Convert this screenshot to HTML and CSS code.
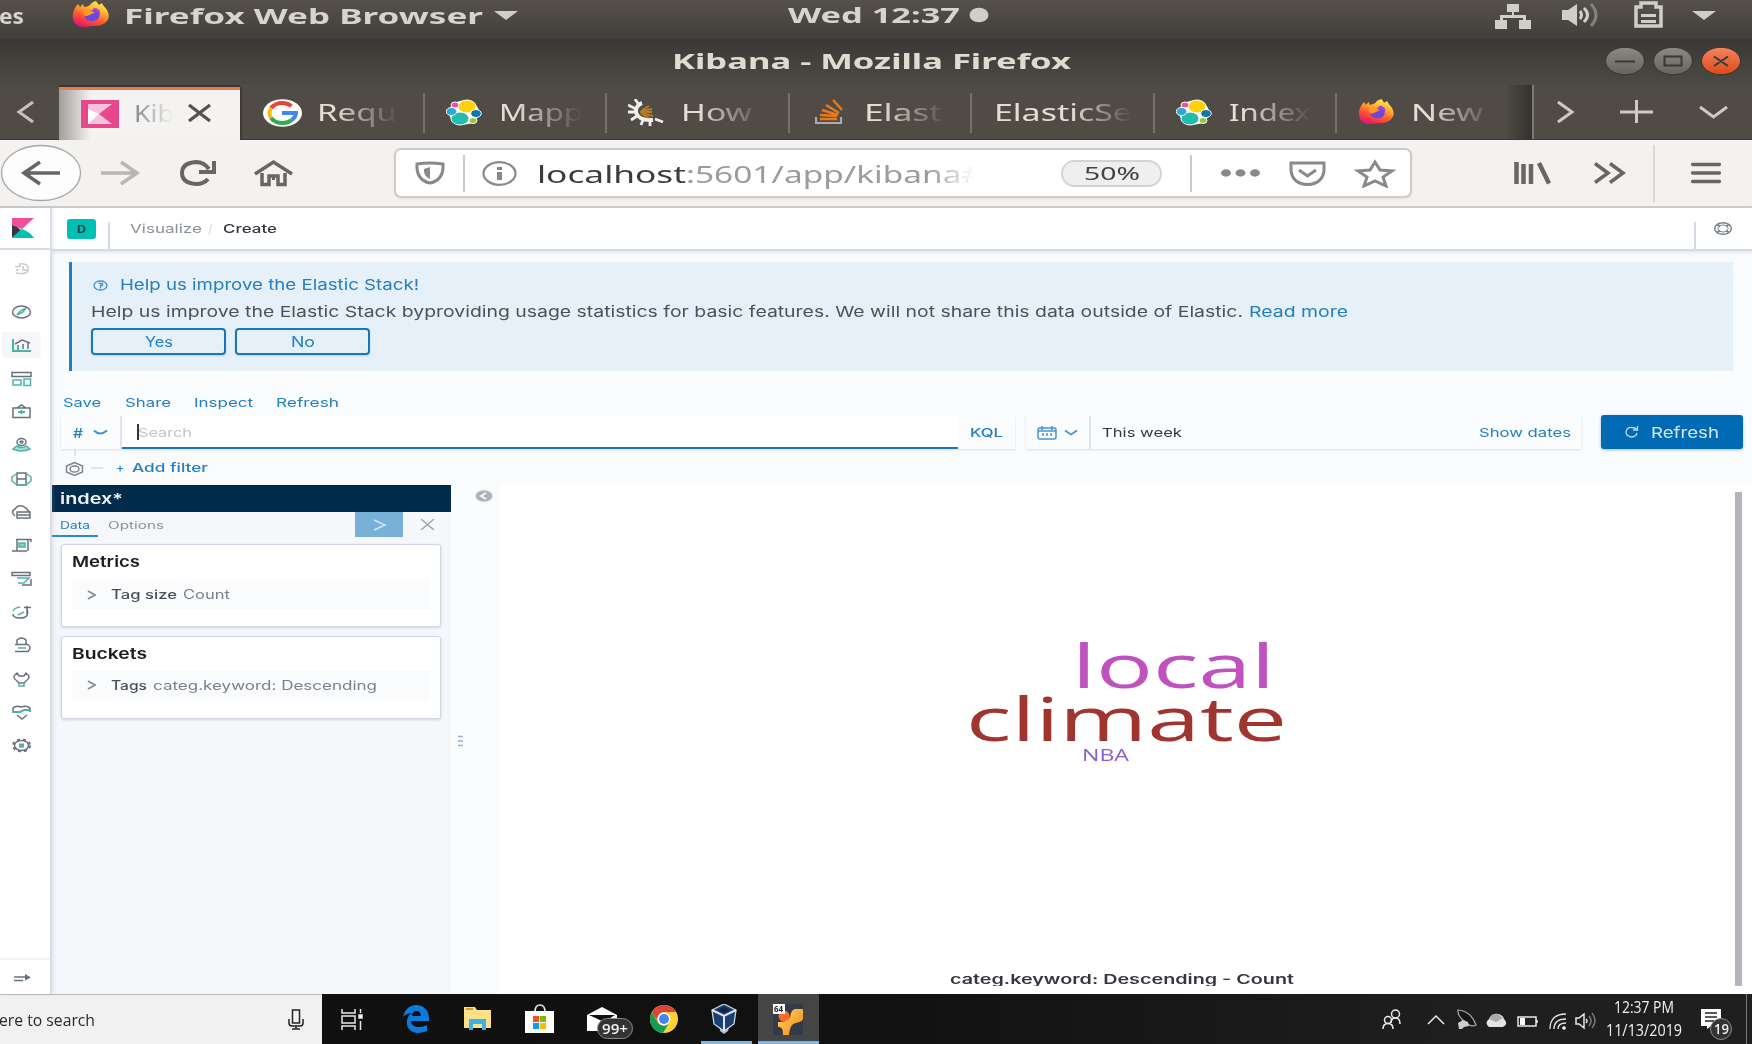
FILE: index.html
```html
<!DOCTYPE html>
<html lang="en">
<head>
<meta charset="utf-8">
<title>Kibana - Mozilla Firefox</title>
<link rel="stylesheet" href="styles.css">
</head>
<body>
<svg class="defs" width="0" height="0">
  <defs>
    <linearGradient id="fx" x1="0.8" y1="0" x2="0.3" y2="1"><stop offset="0" stop-color="#fff44f"/><stop offset=".35" stop-color="#ffb02e"/><stop offset=".65" stop-color="#ff5a2e"/><stop offset="1" stop-color="#e6146e"/></linearGradient>
    <linearGradient id="gb" x1="0" y1="0" x2="0" y2="1"><stop offset="0" stop-color="#8b8982"/><stop offset="1" stop-color="#66645d"/></linearGradient>
    <linearGradient id="ob" x1="0" y1="0" x2="0" y2="1"><stop offset="0" stop-color="#f58461"/><stop offset="1" stop-color="#dd4a16"/></linearGradient>
    <linearGradient id="vm" x1="0" y1="0" x2="1" y2="1"><stop offset="0" stop-color="#ffd45c"/><stop offset="1" stop-color="#f08a1c"/></linearGradient>
    <symbol id="firefox" viewBox="0 0 39 28"><path d="M1 12C2 8 4 5 6 3l2 3 3-3 1 3c3 0 4-1 6-2 1-2 3-3 6-4l3 4 3-2c1 3 3 4 5 7 2 4 3 8-1 12-4 4-9 4-14 4C8 28-1 24 1 12z" fill="url(#fx)"/><ellipse cx="20" cy="14.500" rx="7.500" ry="5.500" fill="#6f46e0"/><path d="M13 8c5 0 7 2 10 4-4 0-5 3-9 3-3 0-4-4-1-7z" fill="#ff9a1f"/><path d="M22 7c5 0 8 4 5 8 0-4-3-5-7-5z" fill="#a33fe0"/></symbol>
    <symbol id="elastic" viewBox="0 0 36 26"><ellipse cx="18" cy="13" rx="15" ry="12" fill="#fff"/><ellipse cx="21" cy="7" rx="9" ry="6.500" fill="#fed10a" stroke="#fff"/><ellipse cx="14" cy="19" rx="9" ry="6.500" fill="#1fbeaf" stroke="#fff"/><ellipse cx="9" cy="5.500" rx="4" ry="3" fill="#f04e98" stroke="#fff"/><ellipse cx="5.500" cy="12" rx="5.300" ry="4" fill="#24a9e0" stroke="#fff"/><ellipse cx="30" cy="14" rx="5.300" ry="4" fill="#0a7aa8" stroke="#fff"/><ellipse cx="27" cy="21" rx="4" ry="3" fill="#93c83e" stroke="#fff"/></symbol>
  </defs>
</svg>

<header class="topbar">
  <span class="es"><span class="t" data-w="25">es</span></span>
  <svg class="fox" width="39" height="28"><use href="#firefox"/></svg>
  <span class="t app" data-w="359">Firefox Web Browser</span>
  <svg class="tri" width="24" height="9"><path d="M0 0h24L12 9z" fill="#d0cec9"/></svg>
  <span class="t clock" data-w="172">Wed 12:37</span>
  <svg class="dot" width="20" height="16"><ellipse cx="10" cy="8" rx="9.500" ry="7.300" fill="#d0cec9"/></svg>
  <svg class="net" width="36" height="26" fill="#d0cec9"><path d="M12 1h12v8h-5v3h12v5h5v9H24v-9h4v-2H8v2h4v9H0v-9h5v-5h12V9h-5z"/></svg>
  <svg class="vol" width="37" height="24"><path d="M0 7h6l9-6v22l-9-6H0z" fill="#d0cec9"/><path d="M18 8q3 4 0 8M22 5q7 7 0 14" fill="none" stroke="#d0cec9" stroke-width="3"/><path d="M29 1q10 11 0 22" fill="none" stroke="#84827c" stroke-width="3"/></svg>
  <svg class="bat" width="29" height="27"><path d="M2 6h5V2h15v4h5v19H2z" fill="none" stroke="#d0cec9" stroke-width="3.500"/><path d="M7 13h15v3H7zM7 19h15v3H7z" fill="#d0cec9"/></svg>
  <svg class="tri2" width="24" height="9"><path d="M0 0h24L12 9z" fill="#d0cec9"/></svg>
</header>

<div class="titlebar">
  <span class="t title" data-w="399">Kibana - Mozilla Firefox</span>
  <svg class="winbtns" width="138" height="30">
    <g stroke="#34332f"><ellipse cx="20" cy="15" rx="19.500" ry="13.700" fill="url(#gb)"/><ellipse cx="68" cy="15" rx="19.500" ry="13.700" fill="url(#gb)"/><ellipse cx="116" cy="15" rx="19.500" ry="13.700" fill="url(#ob)"/></g>
    <path d="M10 15.500h20M59.500 10.500h17v9h-17zM109 10.500l14 9.500M123 10.500L109 20" fill="none" stroke="#3a3934" stroke-width="2"/>
  </svg>
</div>

<nav class="tabs">
  <svg class="tprev" width="20" height="24"><path d="M17 2L3 12l14 10" fill="none" stroke="#c5c1b8" stroke-width="3"/></svg>
  <div class="tab active">
    <svg width="38" height="28"><path fill="#e8478b" d="M0 0h38v28H0z"/><path d="M7 4h24L18 14l13 10H7z" fill="#f5c3da"/><path d="M7 9l11 5L7 24z" fill="#fff"/></svg>
    <span class="clip kil"><span class="t" data-w="40">Kib</span></span>
    <svg class="close" width="25" height="18"><path d="M2 1l21 16M23 1L2 17" stroke="#55534f" stroke-width="3.200"/></svg>
  </div>
  <div class="tab first">
    <svg width="39" height="28"><ellipse cx="19.500" cy="14" rx="19.500" ry="13.700" fill="#fff"/><g fill="none" stroke-width="4"><path d="M8 9q4-5 11.500-5 5 0 9 3" stroke="#ea4335"/><path d="M8 9q-3 5 0 10" stroke="#fbbc05"/><path d="M8 19q4 5 11.500 5 6 0 9-3" stroke="#34a853"/><path d="M19 14h14q0 4-4.500 7" stroke="#4285f4"/></g></svg>
    <span class="clip"><span class="t" data-w="80">Requ</span></span>
  </div>
  <div class="tab"><svg width="36" height="27"><use href="#elastic"/></svg><span class="clip"><span class="t" data-w="84">Mapp</span></span></div>
  <div class="tab"><svg width="36" height="27"><path d="M14 4C5 7 4 22 25 21" fill="none" stroke="#eee" stroke-width="4"/><path d="M7 0l4 6M0 6l8 4M0 13h7M3 21l6-4M13 26l2-5M22 27v-5M35 23l-8-3" stroke="#eee" stroke-width="2.800"/><path d="M12 13h12M14 11l7-4M14 15l7 4M13 12l11-2M13 14l12 3" stroke="#b97a22" stroke-width="2"/></svg><span class="clip"><span class="t" data-w="71">How</span></span></div>
  <div class="tab so"><svg width="28" height="26"><path d="M1 18v6h25v-6" fill="none" stroke="#a9abae" stroke-width="2.200"/><path d="M5 20h17M5 16l17 1M7 11l16 5M11 6l13 8M18 1l9 10" stroke="#e87a1d" stroke-width="2.500"/></svg><span class="clip"><span class="t" data-w="78">Elast</span></span></div>
  <div class="tab plain"><span class="clip wide"><span class="t" data-w="138">ElasticSe</span></span></div>
  <div class="tab"><svg width="36" height="27"><use href="#elastic"/></svg><span class="clip"><span class="t" data-w="82">Index</span></span></div>
  <div class="tab last"><svg width="38" height="27"><use href="#firefox"/></svg><span class="clip"><span class="t" data-w="72">New</span></span></div>
  <div class="overflow"></div>
  <svg class="tabctl" width="220" height="54" fill="none" stroke="#cfcbc2" stroke-width="3"><path d="M26 17l14 10-14 10M88 27h33M104.500 15v23M168 22l13.500 10L195 22"/></svg>
</nav>

<div class="toolbar">
  <svg class="navicons" width="300" height="66" fill="none" stroke="#686663" stroke-width="3.500">
    <ellipse cx="41" cy="33" rx="39.500" ry="27.500" fill="#fdfdfd" stroke="#a9a7a4" stroke-width="1.300"/>
    <path d="M60 33H24M40 22L24 33l16 11"/>
    <path d="M101 33h36M121 22l16 11-16 11" stroke="#b9b7b5"/>
    <path d="M208 39q-4 5-12 5-14-1-14-11t14-11q8 0 13 7" stroke-width="4"/><path d="M214 21v11h-15" stroke-width="4"/>
    <path d="M255 34l18.500-12L292 34"/><path d="M262 33v11.500h7V36h9v8.500h7V33" stroke-width="3.500"/><path d="M272 37h3v3h-3z" fill="#686663" stroke="none"/>
  </svg>
  <div class="url">
    <svg class="shield" width="30" height="24" fill="none" stroke="#8a8987" stroke-width="3"><path d="M2 3q13-2 26 0 1 16-13 19Q1 19 2 3z"/><path d="M15 6v12q-7-3-6-10z" fill="#8a8987" stroke="none"/></svg>
    <i class="vsep"></i>
    <svg class="info" width="35" height="25"><ellipse cx="17.500" cy="12.500" rx="16" ry="11.300" fill="none" stroke="#8a8987" stroke-width="2.200"/><path d="M15 6h5v3h-5zM15 11h5v8h-5z" fill="#8a8987"/></svg>
    <span class="addr"><span class="t host" data-w="149">localhost</span><span class="t path" data-w="297">:5601/app/kibana#</span></span>
    <span class="zoom"><span class="t" data-w="56">50%</span></span>
    <i class="vsep vs2"></i>
    <svg class="urlicons" width="180" height="30" fill="none" stroke="#8a8987" stroke-width="3"><g fill="#8a8987" stroke="none"><ellipse cx="7" cy="15" rx="5" ry="3.700"/><ellipse cx="21.500" cy="15" rx="5" ry="3.700"/><ellipse cx="36" cy="15" rx="5" ry="3.700"/></g><path d="M72 5h33v8q-2 13-16.500 13.500Q74 26 72 13z"/><path d="M80 12l8.500 6 8.500-6"/><path d="M156 4l5 8 12 1-9 6 3 9-11-5-11 5 3-9-9-6 12-1z"/></svg>
  </div>
  <svg class="lib" width="112" height="26" stroke="#686663" stroke-width="4.500" fill="none"><path d="M2.500 2v22M9.500 4v20M17 4v20M25 3l10 20.500"/><path d="M81 3.500L94 13 81 22.500M96 3.500L109 13 96 22.500" stroke-width="3.500"/></svg>
  <i class="tsep"></i>
  <svg class="burger" width="30" height="22"><path d="M1.500 2.500h27M1.500 11h27M1.500 19.500h27" stroke="#686663" stroke-width="3.300" stroke-linecap="round"/></svg>
</div>

<div class="kibana">
  <aside class="side">
    <div class="logo"><svg width="22" height="20"><path d="M0 0h22L10 11 0 7z" fill="#f04e98"/><path d="M0 7q5 1 9 5l-9 8z" fill="#343741"/><path d="M22 20H0l10-9q8 3 12 9z" fill="#00bfb3"/></svg></div>
    <svg class="icons" width="51" height="530" fill="none" stroke="#69707d" stroke-width="1.500">
      <path d="M15 14.500h5v-2M16 18h3M23 14v4h4M16 21q9 2 12-2v-4q-2-4-9-3" stroke="#ccc"/>
      <ellipse cx="21.500" cy="60" rx="9" ry="6"/><path d="M17 63l3-4 6-3-3 4z" stroke="#4db3aa"/>
      <rect x="2" y="80" width="39" height="26" rx="3" fill="#f5f7fa" stroke="none"/>
      <path d="M13 87v12h18M18 98v-5" stroke="#4db3aa" stroke-width="2"/><path d="M15 92l7-4 8 3M23 97v-5M28 97v-6"/>
      <path d="M12 120.500h19v4H12z"/><path d="M13 128h8v5h-8zM24 127h6.500v6.500H24z" stroke="#4db3aa"/>
      <path d="M13 156v9.500h17V156zM17 156l4.500-3 4.500 3"/><path d="M18 160h7M21.500 158v4" stroke="#4db3aa" stroke-width="2"/>
      <ellipse cx="21.500" cy="190" rx="4.500" ry="3.500"/><ellipse cx="21.500" cy="190" rx="1.500" ry="1"/><path d="M13 197q8 4 17 0l-4-3q-4 3-9 0z" fill="#a5dbd6" stroke="#4db3aa"/>
      <path d="M17 221h9v12h-9zM17 227h9"/><path d="M16 222l-4 3v4l5 4h9l5-4v-4l-4-3" stroke="#4db3aa"/>
      <path d="M15 264q-5-4 0-7 4-6 11-1l4 5M17 260h13v6H17zM17 263h13"/><path d="M19 263h5" stroke="#4db3aa"/>
      <path d="M16 287.500h15M17 288v11M28 288v11M12 299h15M31 287v3"/><path d="M19 291h6v4h-6z" fill="#8cd0ca" stroke="#4db3aa"/>
      <path d="M12 320.500h18v3H12zM22 333h9v-6"/><path d="M17 326h12l-5 5h-6" stroke="#4db3aa"/>
      <path d="M13 362q0 4 7 4 10 0 7-9M24 355.500h7M27 354v8"/><path d="M13 359q1-3 7-4M18 363l6-3" stroke="#4db3aa"/>
      <path d="M17 392v-4q5-4 9 0v4M15 399.500h13q4-4 0-7H15"/><path d="M18 396h8" stroke="#4db3aa"/>
      <path d="M17 421l2 3h5l2-3q6 4 0 8l-2 2h-5l-2-2q-6-4 0-8z"/><path d="M19 431v3h5v-3" stroke="#4db3aa"/>
      <path d="M13 460v-4q3-3 8-1 6-2 9 1v4M17 463l5 4 5-4"/><path d="M12 460h8l4-2h7" stroke="#4db3aa" stroke-width="2"/>
      <ellipse cx="21.500" cy="493.500" rx="7" ry="5" stroke-width="1.500"/><ellipse cx="21.500" cy="493.500" rx="8.700" ry="6" stroke-dasharray="3 3" stroke-width="1.800"/><path d="M19 491.500h5v4h-5z" fill="#4db3aa" stroke="none"/>
    </svg>
    <div class="expand"><svg width="17" height="9"><path d="M0 3h12M0 6.500h9" stroke="#69707d" stroke-width="1.300"/><path d="M11 0l6 3.500-6 3z" fill="#69707d"/></svg></div>
  </aside>

  <div class="main">
    <div class="head">
      <span class="space"><span class="t" data-w="9">D</span></span>
      <i class="hsep"></i>
      <span class="t crumb" data-w="72">Visualize</span><span class="slash">/</span><span class="t crumb cur" data-w="54">Create</span>
      <i class="hsep right"></i>
      <svg class="help" width="20" height="15" fill="none" stroke="#7b818c"><ellipse cx="10" cy="7.500" rx="8.300" ry="5.800" stroke-width="1.500"/><ellipse cx="10" cy="7.500" rx="5" ry="3.500"/><path d="M4 3.500l3 2M16 3.500l-3 2M4 11.500l3-2M16 11.500l-3-2" stroke-width="2"/></svg>
    </div>

    <section class="callout">
      <div class="ctitle"><svg width="15" height="11" fill="none" stroke="#4594cc" stroke-width="1.300"><ellipse cx="7.500" cy="5.500" rx="6.500" ry="4.500"/><path d="M5.500 3.500h4v2h-2v3"/></svg><span class="t" data-w="299">Help us improve the Elastic Stack!</span></div>
      <div class="cbody"><span class="t" data-w="1152">Help us improve the Elastic Stack byproviding usage statistics for basic features. We will not share this data outside of Elastic.</span><span class="t more" data-w="99">Read more</span></div>
      <div class="cbtns"><button><span class="t" data-w="28">Yes</span></button><button><span class="t" data-w="24">No</span></button></div>
    </section>

    <div class="menu"><span class="t" data-w="38">Save</span><span class="t" data-w="46">Share</span><span class="t" data-w="59">Inspect</span><span class="t" data-w="63">Refresh</span></div>

    <div class="query">
      <div class="qbox">
        <div class="saved"><span class="t" data-w="10">#</span><svg width="15" height="7"><path d="M1 1.500q6 6 13 0" fill="none" stroke="#4594cc" stroke-width="2"/></svg></div>
        <div class="input"><i class="caret"></i><span class="t" data-w="54">Search</span></div>
        <div class="kql"><span class="t" data-w="33">KQL</span></div>
      </div>
      <div class="dates">
        <div class="cal"><svg width="20" height="14" fill="none" stroke="#4594cc" stroke-width="1.500"><rect x="1" y="2" width="18" height="11" rx="2"/><path d="M1 5h18M5 0v4M15 0v4M6 7v3M10 7v3M14 7v3"/></svg><svg width="14" height="7"><path d="M1 1.500l6 4 6-4" fill="none" stroke="#4594cc" stroke-width="1.700"/></svg></div>
        <span class="t week" data-w="80">This week</span><span class="t show" data-w="92">Show dates</span>
      </div>
      <div class="refresh"><svg width="15" height="12"><path d="M13 7q-1 4-6 4-5-1-5-5 1-5 6-4.500 3 0 5 2M13.500 0v4H9" fill="none" stroke="#bcd9ee" stroke-width="1.300"/></svg><span class="t" data-w="68">Refresh</span></div>
    </div>

    <div class="filters"><svg width="40" height="27" fill="none" stroke="#7b818c" stroke-width="1.400"><path d="M11 0v7" stroke="#d3dae6"/><path d="M10.500 13.500l8 3.500v6l-8 3.500-8-3.500v-6z"/><ellipse cx="10.500" cy="20" rx="4.500" ry="3"/><path d="M27 19h12" stroke="#d3dae6"/></svg><span class="plus">+</span><span class="t" data-w="76">Add filter</span></div>

    <div class="work">
      <div class="editor">
        <div class="index"><span class="t" data-w="63">index*</span></div>
        <div class="etabs">
          <div class="etab on"><span class="t" data-w="30">Data</span></div><span class="t opt" data-w="56">Options</span>
          <div class="play"><svg width="14" height="12"><path d="M1 1l11 5-11 5" fill="none" stroke="#d5e7f4" stroke-width="1.400"/></svg></div>
          <svg class="x" width="15" height="11"><path d="M1 0l13 11M14 0L1 11" stroke="#9a9fa8" stroke-width="1.300"/></svg>
        </div>
        <div class="card"><h3><span class="t" data-w="68">Metrics</span></h3><div class="agg"><svg width="9" height="10"><path d="M1 1l7 4-7 4" fill="none" stroke="#8b9099" stroke-width="2"/></svg><span class="t lab" data-w="66">Tag size</span><span class="t" data-w="47">Count</span></div></div>
        <div class="card second"><h3><span class="t" data-w="75">Buckets</span></h3><div class="agg"><svg width="9" height="10"><path d="M1 1l7 4-7 4" fill="none" stroke="#8b9099" stroke-width="2"/></svg><span class="t lab" data-w="36">Tags</span><span class="t" data-w="224">categ.keyword: Descending</span></div></div>
      </div>
      <div class="gutter">
        <svg class="collapse" width="18" height="12"><ellipse cx="9" cy="6" rx="8.500" ry="5.800" fill="#adb2bb"/><path d="M11 3L6 6l5 3" fill="none" stroke="#fff" stroke-width="1.600"/></svg>
        <svg class="handle" width="6" height="12"><path d="M0 1.500h5M0 6h5M0 10.500h5" stroke="#9fb0c6" stroke-width="1.500"/></svg>
      </div>
      <div class="viz">
        <div class="cloud">
          <span class="word local"><span class="t" data-w="203">local</span></span>
          <span class="word climate"><span class="t" data-w="321">climate</span></span>
          <span class="word nba"><span class="t" data-w="47">NBA</span></span>
        </div>
        <div class="caption"><span class="t" data-w="344">categ.keyword: Descending - Count</span></div>
        <i class="scroll"></i>
      </div>
    </div>
  </div>
</div>

<footer class="taskbar">
  <div class="search"><span class="t" data-w="96">ere to search</span><svg width="16" height="21" fill="none" stroke="#222" stroke-width="1.500"><rect x="4.500" y="1" width="7" height="13"/><path d="M1 10v4q0 3 3 3h8q3 0 3-3v-4M8 17v3M4 20h8"/></svg></div>
  <div class="apps">
    <svg class="tv" width="22" height="21" fill="none" stroke="#e8e8e8" stroke-width="1.500"><path d="M1 0v4h13V0M1 21v-4h13v4M1 7h13v7H1zM19.500 0v4M19.500 12v9"/><path d="M18 6h3v3h-3z" fill="#fff"/></svg>
    <svg width="26" height="28"><path d="M0 12C2 4 7 0 13 0c8 0 13 6 13 13v3H8c0 4 4 6 8 6 3 0 6-1 8-2v6c-3 1-6 2-9 2C7 28 3 22 4 16c0-3 2-6 5-8-4 0-7 2-9 4zm9-1h9c0-3-2-5-4-5-3 0-5 2-5 5z" fill="#0b7bdc"/></svg>
    <svg class="folder" width="29" height="24"><path d="M1 0h11l2 3h14v18H1z" fill="#ffe08a"/><path d="M3 1h7v2H3z" fill="#d5962a"/><path d="M6 23V12h17v11h-4v-6h-9v6z" fill="#38b2ea"/></svg>
    <svg class="store" width="30" height="30"><path d="M10 8q0-7 5-7t5 7" fill="none" stroke="#ddd" stroke-width="1.700"/><path d="M0 7h29v22H0z" fill="#fff"/><path d="M8 12h6v6H8z" fill="#f25022"/><path d="M15 12h6v6h-6z" fill="#7fba00"/><path d="M8 19h6v6H8z" fill="#00a4ef"/><path d="M15 19h6v6h-6z" fill="#ffb900"/></svg>
    <div class="mail"><svg width="31" height="26"><path d="M0 8L15 0l15 8v16H0z" fill="#fff"/><path d="M2 8h26L17 15z" fill="#111"/></svg><span class="badge"><span class="t" data-w="26">99+</span></span></div>
    <svg class="chrome" width="28" height="28"><circle cx="14" cy="14" r="14" fill="#fdd03b"/><path d="M1.900 7A14 14 0 0 1 26.100 7H14a7 7 0 0 0-6 10z" fill="#db4437"/><path d="M1.900 7A14 14 0 0 0 13 28l6-10a7 7 0 0 1-11 0z" fill="#0f9d58"/><circle cx="14" cy="14" r="6.500" fill="#fff"/><circle cx="14" cy="14" r="5" fill="#4285f4"/></svg>
    <div class="run vb"><svg width="26" height="30"><path d="M8 20h11l-2 7-4 3-4-3z" fill="#aebfd2"/><path d="M13 0l12 6-2 14-10 7L3 20 1 6z" fill="#1b3f70" stroke="#c9d6e4" stroke-width="1.300"/><path d="M1 6l12 6 12-6M13 12v15" fill="none" stroke="#dde6ef" stroke-width="2"/><path d="M6 6l7-3 7 3-7 3z" fill="#0c274c"/></svg></div>
    <div class="run on"><svg width="30" height="31"><path d="M0 0h30v31H0z" fill="#333a49"/><circle cx="11" cy="12" r="5.500" fill="#ff6a2c"/><path d="M30 5h-8c-4 1-4 5-5 8-2 4-5 5-12 5v5c4 0 5 2 5 8h6c1-7 2-11 7-12 4-1 7-2 7-5z" fill="url(#vm)"/><path d="M0 0h12v10H0z" fill="#fff"/></svg><span class="bits"><span class="t" data-w="9">64</span></span></div>
  </div>
  <svg class="tray" width="216" height="24" fill="none" stroke="#e8e8e8" stroke-width="1.500">
    <circle cx="13.500" cy="6" r="4"/><path d="M9 15q0-5 4.500-5t4.500 6"/><circle cx="6" cy="12" r="3.500"/><path d="M1 21q0-5.500 5-5.500t5 5.500"/>
    <path d="M46 16l8-8 8 8"/>
    <path d="M76 2q13 1 18 15-5 3-12-4-7-6-6-11z" fill="#151515" stroke="#aaa" stroke-width="1.200"/><path d="M76 15l5-3 5 2 1 4-5 1-2 2h-3z" fill="#ccc"  stroke="none"/>
    <path d="M107 19q-5-4 0-8 3-6 9-5 5 1 6 5 5 5-1 8z" fill="#e4e4e4" stroke="none"/><path d="M107 11q3-6 9-5l5 4-7 4z" fill="#aaa" stroke="none"/>
    <path d="M136 9h18v9h-18zM155 12v3"/><path d="M138 10h5v7h-5z" fill="#fff" stroke="none"/>
    <path d="M168 21Q168 6 184 6M172 21Q172 11 184 11M176 21q0-6 8-6" stroke-width="1.300"/><circle cx="182" cy="20" r="1.800" fill="#fff" stroke="none"/>
    <path d="M194 10h3l5-4v14l-5-4h-3zM204 11q2 2 0 4"/><path d="M207 8q4 5 0 10M210 5q6 8 0 15" stroke="#777"/>
  </svg>
  <div class="when"><span class="t" data-w="60">12:37 PM</span><span class="t" data-w="76">11/13/2019</span></div>
  <div class="note"><svg width="22" height="20"><path d="M0 0h20v17H10l-4 3v-3H0z" fill="#fff"/><path d="M4 4h12M4 8h12M4 12h9" stroke="#222" stroke-width="1.500"/></svg><span class="badge num"><span class="t" data-w="15">19</span></span></div>
  <i class="peek"></i>
</footer>
<script src="fit.js"></script>
</body>
</html>
```

FILE: styles.css
```css
* { box-sizing: border-box; }
body { margin: 0; width: 1752px; height: 1044px; overflow: hidden; font-family: Inter, sans-serif; background: #fff; display: flex; flex-direction: column; }
svg { flex: none; display: block; }
i { flex: none; display: block; }
.defs { position: absolute; }
.t { display: inline-block; flex: none; white-space: pre; transform-origin: 0 50%; }

/* desktop top bar */
.topbar { flex: none; height: 38px; display: flex; align-items: flex-start; background: linear-gradient(#56524a, #403f3a); font: 700 22px/31px "Noto Sans", sans-serif; color: #d6d4cf; }
.es { width: 73px; margin-left: -1px; }
.fox { margin-top: 1px; }
.app { margin-left: 13px; }
.tri { margin: 11px 0 0 11px; }
.clock { margin-left: 270px; margin-top: -1px; }
.dot { margin: 7px 0 0 9px; }
.net { margin: 3px 0 0 506px; }
.vol { margin: 3px 0 0 31px; }
.bat { margin: 1px 0 0 35px; }
.tri2 { margin: 11px 0 0 29px; }

.titlebar { flex: none; height: 47px; display: flex; align-items: flex-start; background: linear-gradient(#393834, #4c4a44); font: 700 22px/31px "Noto Sans", sans-serif; color: #e0dbd1; }
.title { margin: 7px 0 0 672px; }
.winbtns { margin: 8px 0 0 534px; }

/* tabs */
.tabs { flex: none; height: 55px; display: flex; align-items: flex-start; background: #504c45; border-bottom: 1px solid #3a3835; font: 400 23px/31px "Noto Sans", sans-serif; color: #e4dfd5; }
.tprev { margin: 15px 23px 0 16px; }
.tab { flex: none; width: 182.400px; height: 40px; margin-top: 8px; padding: 6px 0 0 21px; display: flex; gap: 17px; border-left: 2px solid #75716a; }
.tab.first { border-color: transparent; padding-left: 21px; gap: 15px; width: 183px; }
.tab.active { width: 181px; height: 53px; margin: 2px 0 0; padding: 10px 0 0 22px; gap: 15px; background: linear-gradient(90deg, #a09e9b, #f4f3f2 32px); border: 0; border-top: 3px solid #f07746; box-shadow: 0 -2px #393733, 2px 0 #3d3b37; color: #8f9294; }
.tab .clip { width: 86px; height: 34px; margin-top: -2px; overflow: hidden; mask-image: linear-gradient(90deg, #000 20%, transparent 96%); }
.tab .clip.kil { width: 41px; mask-image: linear-gradient(90deg, #000 10%, transparent 95%); }
.tab .clip.wide { width: 138px; mask-image: linear-gradient(90deg, #000 55%, transparent 100%); }
.close { margin: 4px 0 0 -3px; }
.tab.so { padding-left: 25px; gap: 21px; }
.tab.plain { padding-left: 22px; }
.overflow { flex: none; width: 30px; height: 54px; background: linear-gradient(90deg, #504c45, #34322f); border-right: 2px solid #7f7b74; margin-left: -1px; }
.tabctl { flex: none; margin-left: -2px; }
.tabs .last { width: 170px; gap: 15px; }

/* toolbar */
.toolbar { flex: none; height: 68px; display: flex; align-items: center; background: #f3f2f1; border-bottom: 2px solid #cfccc8; }
.navicons { margin-right: 94px; }
.url { flex: none; width: 1018px; height: 50px; display: flex; align-items: center; background: #fff; border: 2px solid #cdcac7; border-radius: 7px; font: 400 24px/34px "Noto Sans", sans-serif; box-shadow: 0 1px 3px #0001; }
.shield { margin-left: 19px; }
.vsep { width: 2px; height: 37px; background: #cbc9c6; margin-left: 18px; }
.info { margin-left: 17px; }
.addr { width: 447px; margin: 2px 0 0 20px; display: flex; overflow: hidden; mask-image: linear-gradient(90deg, #000 88%, transparent 98%); }
.host { color: #3c3c3c; }
.path { color: #9c9c9c; }
.zoom { flex: none; width: 101px; height: 27px; margin-left: 77px; display: flex; justify-content: center; border: 2px solid #d3d5d5; border-radius: 16px; background: #efefef; font-size: 18px; line-height: 23px; color: #444; }
.vs2 { margin-left: 28px; }
.urlicons { margin-left: 27px; }
.lib { margin-left: 102px; }
.tsep { width: 2px; height: 57px; background: #dcdad8; margin-left: 27px; }
.burger { margin-left: 36px; }

/* kibana page */
.kibana { flex: none; height: 786px; display: flex; background: #fafbfd; color: #343741; font-size: 12px; }
.side { flex: none; width: 52px; display: flex; flex-direction: column; background: #fff; border-right: 2px solid #d9dfe9; box-shadow: 1px 0 4px #98a2b340; position: relative; }
.logo { height: 42px; padding: 10px 0 0 12px; border-bottom: 2px solid #d3dae6; flex: none; }
.icons { margin-top: 2px; }
.expand { margin-top: auto; height: 36px; padding: 14px 0 0 14px; border-top: 2px solid #f2f3f5; box-shadow: 0 -2px 4px #00000006; }
.main { flex: none; width: 1700px; display: flex; flex-direction: column; }
.head { flex: none; height: 43px; display: flex; align-items: center; background: #fff; border-bottom: 2px solid #d6dce6; box-shadow: 0 2px 3px #98a2b333; }
.space { flex: none; width: 29px; height: 20px; margin-left: 15px; border-radius: 3px; background: #00bfb3; color: #083f45; font: 700 10px/20px Inter, sans-serif; text-align: center; }
.hsep { width: 2px; height: 28px; background: #d3dae6; margin: 14px 0 0 12px; }
.crumb { margin-left: 20px; color: #8a9099; }
.slash { width: 21px; padding-left: 6px; color: #d3dae6; flex: none; }
.crumb.cur { margin-left: 0; color: #343741; font-weight: 500; }
.hsep.right { margin-left: 1417px; }
.help { margin-left: 17px; }

.callout { flex: none; width: 1664px; height: 109px; margin: 11px 0 0 17px; padding: 13px 0 0 19px; background: #e6f0f8; border-left: 3px solid #2280c2; font-size: 15px; line-height: 20px; }
.ctitle { display: flex; align-items: center; gap: 12px; padding-left: 2px; color: #237fbf; }
.cbody { display: flex; gap: 6px; margin-top: 7px; color: #4c505c; }
.more { color: #237fbf; }
.cbtns { display: flex; gap: 9px; margin-top: 6px; }
.cbtns button { width: 135px; height: 27px; padding: 0; border: 2px solid #1a76b8; border-radius: 4px; background: transparent; font: 400 14.500px/20px Inter, sans-serif; color: #237fbf; box-shadow: 0 1px 2px #0065a133; }
.menu { flex: none; display: flex; height: 20px; margin: 22px 0 0 11px; line-height: 20px; color: #237fbf; }
.menu .t:nth-child(2) { margin-left: 24px; }
.menu .t:nth-child(3) { margin-left: 23px; }
.menu .t:nth-child(4) { margin-left: 23px; }

.query { flex: none; height: 34px; display: flex; margin: 2px 0 0 9px; }
.qbox { flex: none; width: 954px; height: 33px; margin-top: 1px; display: flex; background: #fbfcfd; box-shadow: 0 1px 2px #98a2b355; }
.saved { flex: none; width: 61px; display: flex; align-items: center; gap: 10px; padding-left: 12px; color: #237fbf; border-right: 2px solid #e0e4ea; font-size: 13px; font-weight: 500; }
.input { flex: none; width: 836px; display: flex; align-items: center; background: #fff; padding-left: 15px; color: #bfc3cb; border-bottom: 2px solid #1a76b8; }
.caret { width: 2px; height: 16px; margin-right: -1px; background: #343741; }
.input .t { margin-top: 1px; }
.kql { padding: 10px 0 0 12px; color: #237fbf; font-size: 11.500px; line-height: 14px; font-weight: 500; }
.dates { flex: none; width: 555px; height: 33px; margin: 1px 0 0 11px; display: flex; align-items: center; background: #fbfcfd; box-shadow: 0 1px 2px #98a2b355; }
.cal { height: 33px; width: 65px; padding-left: 11px; display: flex; align-items: center; gap: 7px; border-right: 2px solid #e0e4ea; }
.week { margin-left: 11px; }
.show { margin-left: 297px; color: #237fbf; }
.refresh { flex: none; width: 142px; height: 34px; margin-left: 20px; padding-left: 23px; display: flex; align-items: center; gap: 12px; background: #006bb4; border-radius: 3px; color: #d5e7f4; font-size: 15px; box-shadow: 0 1px 3px #006bb466; }
.filters { flex: none; height: 36px; display: flex; padding-left: 12px; line-height: 38px; color: #237fbf; font-weight: 500; }
.plus { width: 16px; margin-left: 12px; flex: none; }

.work { flex: none; height: 509px; display: flex; }
.editor { flex: none; width: 400px; margin-left: -1px; background: #f5f7fb; }
.index { height: 27px; padding-left: 9px; background: #012b4a; color: #f0f3f6; font-size: 15px; line-height: 27px; font-weight: 600; }
.etabs { height: 25px; display: flex; line-height: 26px; font-size: 10px; color: #8a9099; }
.etab.on { flex: none; width: 47px; height: 25px; padding-left: 9px; border-bottom: 2px solid #3089c8; color: #237fbf; }
.opt { margin-left: 10px; }
.play { flex: none; width: 48px; height: 25px; margin-left: 191px; padding: 7px 0 0 18px; background: #79b0d8; }
.x { margin: 7px 0 0 17px; }
.card { width: 380px; height: 83px; margin: 7px 0 0 10px; padding: 7px 10px 0; background: #fff; border: 1px solid #d0d8e5; border-radius: 3px; box-shadow: 0 1px 3px #98a2b366; }
.card.second { margin-top: 9px; }
.card.second .agg { margin-top: 7px; height: 30px; }
.card h3 { margin: 0; font-size: 15px; line-height: 19px; font-weight: 600; color: #1a1c21; }
.agg { height: 31px; margin-top: 8px; display: flex; align-items: center; background: #fafbfd; padding-left: 15px; color: #7b818c; font-size: 12.500px; }
.agg .lab { margin: 0 6px 0 15px; color: #4c505c; font-weight: 500; }
.gutter { flex: none; width: 49px; }
.collapse { margin: 5px 0 0 24px; }
.handle { margin: 233px 0 0 7px; }
.viz { flex: none; width: 1252px; display: grid; background: #fff; grid-template: 501px 8px / 1235px 8px; }
.cloud { grid-area: 1 / 1; display: flex; flex-direction: column; font-family: "Open Sans", sans-serif; }
.word { display: block; height: 53px; font-size: 60px; line-height: 53px; }
.local { margin: 154px 0 0 572px; color: #bf52bf; }
.climate { margin-left: 466px; color: #a03530; }
.nba { margin: 0 0 0 582px; color: #8a5ccc; font-size: 17px; line-height: 20px; height: 20px; }
.caption { grid-area: 1 / 1; align-self: end; height: 17px; margin-left: 450px; overflow: hidden; font-size: 13px; line-height: 21px; font-weight: 600; }
.scroll { grid-area: 1 / 2; width: 7px; height: 494px; margin-top: 7px; background: #b2b5bd; }

/* taskbar */
.taskbar { flex: none; height: 50px; display: flex; background: linear-gradient(90deg, #101010, #111 50%, #1f1f1f 85%); color: #f2f2f2; font-family: "Open Sans", sans-serif; }
.search { flex: none; width: 322px; height: 50px; display: flex; align-items: center; justify-content: space-between; padding-right: 18px; background: #f1f1f1; border-top: 1px solid #bbb; color: #2a2a2a; font-size: 17px; }
.search .t { margin-left: -1px; }
.apps { flex: none; display: flex; height: 50px; padding-top: 11px; }
.tv { margin: 4px 40px 0 19px; }
.folder { margin: 2px 0 0 34px; }
.store { margin: -1px 0 0 33px; }
.mail { flex: none; width: 46px; margin: 2px 0 0 32px; position: relative; }
.badge { position: absolute; left: 10px; top: 11px; width: 36px; height: 21px; padding-left: 4px; border: 1px solid #8a8a8a; border-radius: 11px; background: #333; font-size: 15px; line-height: 19px; font-weight: 600; }
.chrome { margin-left: 17px; }
.run { flex: none; width: 51px; height: 50px; margin: -11px 0 0 23px; padding: 10px 0 0 10px; border-bottom: 3px solid #76b9ed; }
.run.on { width: 61px; margin-left: 6px; padding-left: 15px; background: #454545; position: relative; }
.bits { position: absolute; left: 16px; top: 10px; font-size: 8px; line-height: 10px; font-weight: 700; color: #222; }
.tray { margin: 14px 0 0 563px; }
.when { flex: none; width: 88px; margin-left: 2px; display: flex; flex-direction: column; align-items: center; font-size: 16px; line-height: 23px; padding-top: 2px; }
.note { flex: none; width: 32px; margin: 15px 0 0 13px; position: relative; }
.badge.num { left: 9px; top: 9px; width: 22px; height: 22px; padding-left: 3px; line-height: 20px; font-size: 14px; }
.peek { width: 1px; height: 50px; background: #777; margin-left: 13px; }
```

FILE: fit.js
```js
// Stretch each label horizontally to the width given in data-w.
document.querySelectorAll('.t').forEach(function (el) {
  var want = parseFloat(el.dataset.w);
  var natural = el.getBoundingClientRect().width;
  el.style.transform = 'scaleX(' + want / natural + ')';
  el.style.marginRight = (want - natural + parseFloat(getComputedStyle(el).marginRight)) + 'px';
});
```
